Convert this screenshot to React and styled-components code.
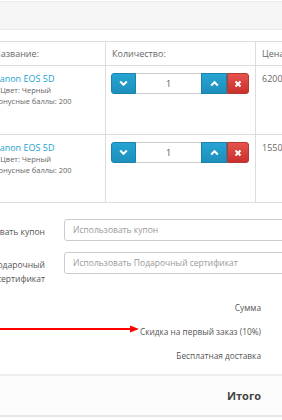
import React from "react";
import styled, { createGlobalStyle } from "styled-components";

const Global = createGlobalStyle`
  html, body { margin: 0; padding: 0; background: #fff; }
  body { font-family: "Open Sans", "Liberation Sans", sans-serif; color: #666; }
  * { box-sizing: border-box; }
`;

const Page = styled.div`
  position: relative;
  width: 282px;
  height: 420px;
  overflow: hidden;
  padding-top: 1px;
`;

const Breadcrumb = styled.div`
  height: 29px;
  margin: 0 -10px;
  background: #f5f5f5;
  border-top: 1px solid #ececec;
  border-bottom: 1px solid #ececec;
`;

const Table = styled.table`
  margin-top: 11px;
  margin-left: -13px;
  width: 340px;
  border-collapse: collapse;
  table-layout: fixed;
  font-size: 9px;
  line-height: 13px;
`;

const Th = styled.th`
  width: ${(p) => p.$w}px;
  text-align: left;
  font-weight: normal;
  color: #666;
  padding: 5px 6px;
  border: 1px solid #ddd;
  white-space: nowrap;
  overflow: hidden;
`;

const Td = styled.td`
  vertical-align: top;
  padding: ${(p) => (p.$qty ? "7px 5px 0" : "6px 6px 0")};
  height: ${(p) => p.$h}px;
  border: 1px solid #ddd;
  white-space: nowrap;
  color: #666;
`;

const ProductLink = styled.a`
  color: #23a1d1;
  text-decoration: none;
  font-size: 9px;
`;

const Small = styled.small`
  display: block;
  font-size: 7.5px;
  line-height: 11px;
  color: #666;
`;

const QtyGroup = styled.div`
  display: flex;
  height: 21px;
  width: 138px;
`;

const Btn = styled.button`
  flex: none;
  width: ${(p) => p.$w}px;
  height: 21px;
  padding: 0;
  border: 1px solid ${(p) => (p.$red ? "#b8372f" : "#1b83ab")};
  background: ${(p) =>
    p.$red
      ? "linear-gradient(#e5534c, #c9302c)"
      : "linear-gradient(#26a4d3, #1d8fbc)"};
  border-radius: ${(p) => p.$radius};
  display: flex;
  align-items: center;
  justify-content: center;
`;

const QtyInput = styled.div`
  flex: 1;
  height: 21px;
  border-top: 1px solid #ccc;
  border-bottom: 1px solid #ccc;
  text-align: center;
  font-size: 9px;
  line-height: 19px;
  color: #555;
`;

const Form = styled.div`
  margin-top: 16px;
  display: flex;
  flex-direction: column;
  gap: 11px;
`;

const FormRow = styled.div`
  display: grid;
  grid-template-columns: 125px 1fr;
  column-gap: 19px;
  margin-left: -80px;
  margin-right: -20px;
`;

const Label = styled.label`
  padding-top: 6px;
  text-align: right;
  font-size: 8.5px;
  line-height: 14px;
  color: #555;
`;

const Field = styled.div`
  height: 22px;
  border: 1px solid #ccc;
  border-radius: 3px;
  padding: 0 8px;
  font-size: 8.5px;
  line-height: 20px;
  color: #999;
  white-space: nowrap;
`;

const Totals = styled.div`
  margin-top: 9px;
  display: flex;
  flex-direction: column;
`;

const TotalRow = styled.div`
  height: 24px;
  display: flex;
  align-items: center;
  justify-content: flex-end;
  padding-right: 21px;
  font-size: 8.3px;
  color: #555;
`;

const GrandTotal = styled.div`
  margin: 7px -10px 0;
  height: 43px;
  background: #fcfcfc;
  border-top: 2px solid #efefef;
  border-bottom: 2px solid #e6e6e6;
  display: flex;
  align-items: center;
  justify-content: flex-end;
  padding-right: 31px;
  font-size: 11px;
  font-weight: bold;
  color: #444;
`;

const Arrow = styled.svg`
  position: absolute;
  left: 0;
  top: 324px;
`;

const Chevron = ({ up }) => (
  <svg width="9" height="7" viewBox="0 0 9 7">
    <path
      d={up ? "M1.2 5.5 L4.5 2.2 L7.8 5.5" : "M1.2 1.5 L4.5 4.8 L7.8 1.5"}
      fill="none"
      stroke="#fff"
      strokeWidth="2"
    />
  </svg>
);

const Cross = () => (
  <svg width="8" height="8" viewBox="0 0 8 8">
    <path d="M1.5 1.5 L6.5 6.5 M6.5 1.5 L1.5 6.5" stroke="#fff" strokeWidth="2" />
  </svg>
);

const ProductRow = ({ price, h }) => (
  <tr>
    <Td $h={h}>
      <ProductLink href="#">Canon EOS 5D</ProductLink>
      <Small>-&nbsp;&nbsp;Цвет: Черный</Small>
      <Small>Бонусные баллы: 200</Small>
    </Td>
    <Td $h={h} $qty>
      <QtyGroup>
        <Btn $w={25} $radius="3px 0 0 3px">
          <Chevron />
        </Btn>
        <QtyInput>1</QtyInput>
        <Btn $w={26} $radius="0">
          <Chevron up />
        </Btn>
        <Btn $w={22} $red $radius="0 3px 3px 0">
          <Cross />
        </Btn>
      </QtyGroup>
    </Td>
    <Td $h={h}>{price}</Td>
  </tr>
);

export default function App() {
  return (
    <>
      <Global />
      <Page>
        <Breadcrumb />
        <Table>
          <thead>
            <tr>
              <Th $w={118}>Название:</Th>
              <Th $w={150}>Количество:</Th>
              <Th $w={72}>Цена за шт.:</Th>
            </tr>
          </thead>
          <tbody>
            <ProductRow price="6200р." h={69} />
            <ProductRow price="1550р." h={68} />
          </tbody>
        </Table>
        <Form>
          <FormRow>
            <Label>Использовать купон</Label>
            <Field>Использовать купон</Field>
          </FormRow>
          <FormRow>
            <Label>Использовать Подарочный сертификат</Label>
            <Field>Использовать Подарочный сертификат</Field>
          </FormRow>
        </Form>
        <Totals>
          <TotalRow>Сумма</TotalRow>
          <TotalRow>Скидка на первый заказ (10%)</TotalRow>
          <TotalRow>Бесплатная доставка</TotalRow>
        </Totals>
        <GrandTotal>Итого</GrandTotal>
        <Arrow width="140" height="10" viewBox="0 0 140 10">
          <line x1="0" y1="5" x2="132" y2="5" stroke="#f00" strokeWidth="2" />
          <polygon points="130,1.5 139,5 130,8.5" fill="#f00" />
        </Arrow>
      </Page>
    </>
  );
}
